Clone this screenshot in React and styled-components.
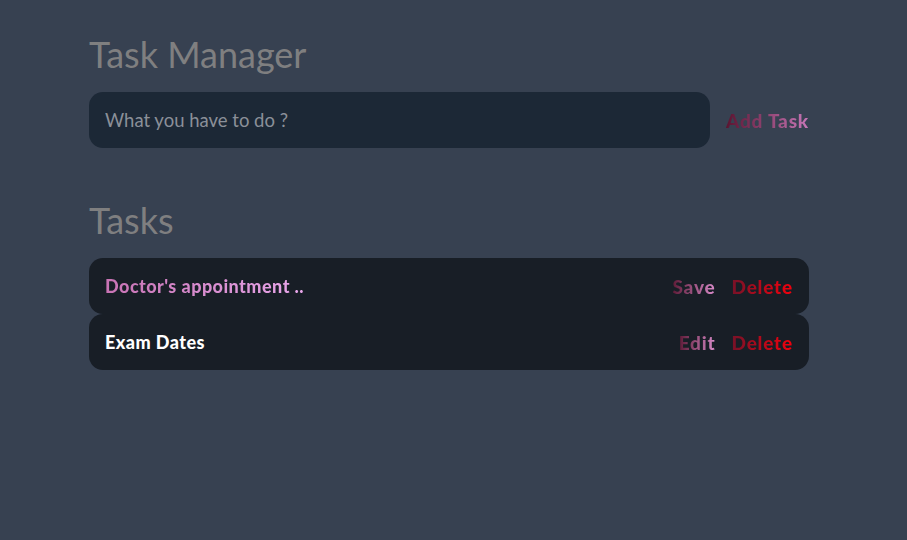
import React from 'react'
import styled, { createGlobalStyle } from 'styled-components'

const Global = createGlobalStyle`
  html, body {
    margin: 0;
    padding: 0;
    background: #374151;
    font-family: "Gill Sans", "Lato", "Liberation Sans", sans-serif;
  }
`

const Page = styled.div`
  min-height: 540px;
  padding: 32px 0 0 89px;
  box-sizing: border-box;
`

const Container = styled.div`
  width: 720px;
`

const Heading = styled.h1`
  margin: 0;
  font-size: 36px;
  font-weight: 400;
  color: #7f7f80;
  line-height: 44px;
`

const Form = styled.form`
  display: flex;
  align-items: center;
  gap: 16px;
  margin-top: 16px;
`

const Input = styled.input`
  width: 621px;
  height: 56px;
  box-sizing: border-box;
  border: none;
  outline: none;
  border-radius: 14px;
  background: #1c2836;
  padding: 0 16px;
  font-family: inherit;
  font-size: 18.5px;
  color: #d1d5db;
  &::placeholder {
    color: #8b9099;
  }
`

const GradientButton = styled.button`
  border: none;
  background: ${p => p.$grad};
  -webkit-background-clip: text;
  background-clip: text;
  color: transparent;
  font-family: inherit;
  font-weight: 900;
  font-size: 19px;
  letter-spacing: 0.8px;
  padding: 0;
  cursor: pointer;
`

const Section = styled.div`
  margin-top: 50px;
`

const List = styled.ul`
  list-style: none;
  margin: 16px 0 0;
  padding: 0;
`

const Row = styled.li`
  display: flex;
  align-items: center;
  justify-content: space-between;
  height: 56px;
  border-radius: 14px;
  background: #181e26;
  padding: 0 16px;
`

const TaskText = styled.span`
  font-weight: 900;
  font-size: 18px;
  letter-spacing: 0.45px;
  ${p => p.$editing
    ? `background: linear-gradient(90deg, #c873b4, #e8a6ea);
       -webkit-background-clip: text;
       background-clip: text;
       color: transparent;`
    : 'color: #ffffff;'}
`

const Actions = styled.div`
  display: flex;
  gap: 16px;
`

const pinkGrad = 'linear-gradient(90deg, #5d1a36, #d88ac8)'
const redGrad = 'linear-gradient(90deg, #761228, #f4000c)'

const tasks = [
  { text: "Doctor's appointment ..", editing: true },
  { text: 'Exam Dates', editing: false },
]

export default function App() {
  return (
    <>
      <Global />
      <Page>
        <Container>
          <Heading>Task Manager</Heading>
          <Form onSubmit={e => e.preventDefault()}>
            <Input placeholder="What you have to do ?" />
            <GradientButton $grad="linear-gradient(90deg, #5a1430, #c977b8)">Add Task</GradientButton>
          </Form>
          <Section>
            <Heading>Tasks</Heading>
            <List>
              {tasks.map(t => (
                <Row key={t.text}>
                  <TaskText $editing={t.editing}>{t.text}</TaskText>
                  <Actions>
                    <GradientButton $grad={pinkGrad}>{t.editing ? 'Save' : 'Edit'}</GradientButton>
                    <GradientButton $grad={redGrad}>Delete</GradientButton>
                  </Actions>
                </Row>
              ))}
            </List>
          </Section>
        </Container>
      </Page>
    </>
  )
}
